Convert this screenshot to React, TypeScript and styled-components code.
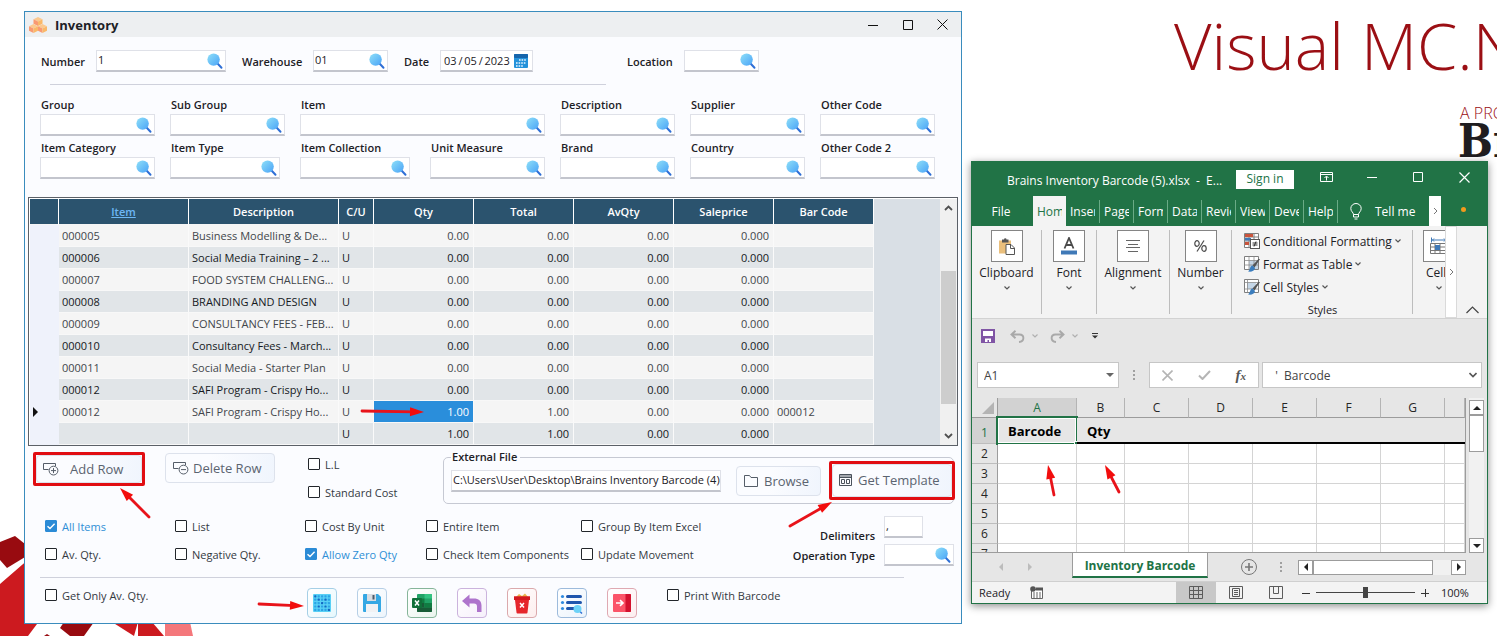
import React from "react";
import styled, { createGlobalStyle, css } from "styled-components";

const GlobalStyle = createGlobalStyle`
  *, *::before, *::after { box-sizing: border-box; }
  body { margin: 0; background: #ffffff; font-family: "Open Sans", "Segoe UI", sans-serif; font-size: 12px; color: #1d2126; }
  button, input { font: inherit; color: inherit; margin: 0; }
  button { padding: 0; border: 0; background: none; }
  svg { display: block; flex: none; }
`;

/* ---------- Desktop ---------- */

const Desktop = styled.div`
  position: relative;
  display: grid;
  grid-template-columns: minmax(0, 938fr) minmax(0, 517fr);
  gap: 9px;
  align-items: start;
  min-height: 100vh;
  padding: 11px 9px 8px 24px;
  overflow: hidden;
`;

const Wallpaper = styled.svg`
  position: absolute;
  left: 0;
  bottom: 0;
`;

const Brand = styled.div`
  position: absolute;
  top: 0;
  left: 1174px;
  white-space: nowrap;
  color: #9b0f14;
`;

const BrandTitle = styled.div`
  font-size: 65px;
  font-weight: 340;
  line-height: 90px;
`;

const BrandNote = styled.div`
  padding: 14px 0 0 286px;
  font-size: 16px;
  font-weight: 300;
  line-height: 18px;
`;

const BrandMaker = styled.div`
  padding-left: 284px;
  color: #1f1d20;
  font-family: "DejaVu Serif Condensed", "DejaVu Serif", serif;
  font-size: 46px;
  font-weight: 700;
  line-height: 38px;
`;

const ArrowSvg = styled.svg<{ $left?: number; $right?: number; $top: number }>`
  position: absolute;
  top: ${(p) => p.$top}px;
  ${(p) => (p.$right !== undefined ? `right: ${p.$right}px;` : `left: ${p.$left}px;`)}
  overflow: visible;
  pointer-events: none;
`;

type ArrowProps = { left?: number; right?: number; top: number; dx: number; dy: number };

/* Red pointer: runs from the tail over (dx, dy) to its tip. */
function Arrow({ left, right, top, dx, dy }: ArrowProps) {
  const w = Math.abs(dx);
  const h = Math.abs(dy);
  const x1 = dx < 0 ? w : 0;
  const y1 = dy < 0 ? h : 0;
  const len = Math.hypot(dx, dy);
  const angle = (Math.atan2(dy, dx) * 180) / Math.PI;
  return (
    <ArrowSvg $left={left} $right={right} $top={top} width={w || 1} height={h || 1} aria-hidden="true">
      <g transform={`translate(${x1} ${y1}) rotate(${angle})`} fill="#f20d0d">
        <path d={`M0 0H${len - 9}`} stroke="#e8131a" strokeWidth="2.8" strokeLinecap="round" />
        <path d={`M${len} 0L${len - 14} -4.5V4.5Z`} />
      </g>
    </ArrowSvg>
  );
}

/* ---------- Inventory window ---------- */

const InventoryWindow = styled.main`
  position: relative;
  background: #fbfcff;
  border: 1px solid #3a8cbd;
`;

const TitleBar = styled.header`
  display: flex;
  align-items: center;
  height: 25px;
  padding: 0 1px 0 4px;
  background: #edeff1;
`;

const WindowTitle = styled.h1`
  flex: 1;
  margin: 0 0 0 8px;
  font-size: 13px;
  font-weight: 700;
  line-height: 18px;
`;

const CaptionButton = styled.button`
  display: grid;
  place-items: center;
  width: 35px;
  height: 25px;
`;

const HeaderRow = styled.div`
  display: flex;
  padding: 13px 0 0 16px;
`;

const HeaderField = styled.div<{ $label: number; $before?: number }>`
  display: grid;
  grid-template-columns: ${(p) => p.$label}px auto;
  align-items: center;
  margin-left: ${(p) => p.$before || 0}px;
`;

const Label = styled.label`
  font-size: 11px;
  font-weight: 600;
  line-height: 17px;
  white-space: nowrap;
`;

const FieldBox = styled.div<{ $width?: number }>`
  display: flex;
  align-items: center;
  width: ${(p) => (p.$width ? `${p.$width}px` : "auto")};
  height: 22px;
  padding-right: 1px;
  background: #ffffff;
  border: 1px solid #dfe1e8;
  border-bottom: 2px solid #c3c5cd;
`;

const DateBox = styled(FieldBox)`
  padding-right: 4px;
`;

const TextInput = styled.input`
  flex: 1;
  min-width: 0;
  width: 100%;
  height: 18px;
  padding: 0 0 2px 1px;
  border: 0;
  background: transparent;
  outline: 0;
  font-size: 11px;
  line-height: 16px;
  text-overflow: clip;
`;

const DateInput = styled(TextInput)`
  padding: 0 0 0 3px;
`;

const HeaderRule = styled.hr`
  width: 556px;
  max-width: 90%;
  margin: 12px 0 0 25px;
  border: 0;
  border-top: 1px solid #cfd1dc;
`;

const Filters = styled.div`
  display: grid;
  grid-template-columns: repeat(7, minmax(0, 1fr));
  gap: 3px 15px;
  padding: 11px 26px 0 15px;
`;

const FilterField = styled.div<{ $span?: number; $short?: boolean }>`
  grid-column: span ${(p) => p.$span || 1};
  display: grid;
  row-gap: 1px;
  padding-right: ${(p) => (p.$short ? 5 : 0)}px;
`;

const FilterLabel = styled(Label)`
  padding-left: 1px;
`;

const GridFrame = styled.div`
  display: flex;
  margin: 18px 3px 0;
  padding: 1px 0 0 1px;
  border: 1px solid #5b6067;
  background: #ffffff;
`;

const DataTable = styled.table`
  flex: none;
  table-layout: fixed;
  width: 844px;
  border-collapse: separate;
  border-spacing: 0;
`;

const HeadCell = styled.th`
  height: 26px;
  padding: 0;
  background: #2b536e;
  border-right: 1px solid #ffffff;
  border-bottom: 1px solid #f5f5f5;
  color: #ffffff;
  font-size: 11px;
  font-weight: 600;
`;

const SortLink = styled.a`
  color: #6db7f5;
`;

const cell = css`
  height: 22px;
  padding: 0 4px 0 3px;
  border-right: 1px solid #fafafa;
  border-bottom: 1px solid #f8f8f8;
  line-height: 16px;
  font-size: 11px;
  font-weight: 400;
  white-space: nowrap;
  overflow: hidden;
`;

const MarkerCell = styled.th`
  ${cell}
  background: #eff2fb;
  border-color: #eff2fb;
`;

const BodyCell = styled.td<{ $alt: boolean; $number?: boolean; $selected?: boolean }>`
  ${cell}
  text-align: ${(p) => (p.$number ? "right" : "left")};
  background: ${(p) => (p.$selected ? "#2a8edb" : p.$alt ? "#e1e5e8" : "#f5f5f5")};
  color: ${(p) => (p.$selected ? "#ffffff" : p.$alt ? "#15191d" : "#42464b")};
`;

const GridFiller = styled.div`
  flex: 1;
  background: #d9dfe5;
`;

const GridScroll = styled.div`
  display: flex;
  flex-direction: column;
  width: 17px;
  padding: 0 1px;
  background: #f0f0f0;
`;

const ScrollEnd = styled.button`
  display: grid;
  place-items: center;
  height: 18px;
`;

const ScrollTrack = styled.div`
  flex: 1;
  display: grid;
  grid-template-rows: 54fr 132fr 23fr;
`;

const ScrollThumb = styled.div`
  grid-row: 2;
  background: #cdcdcd;
`;

const ActionRow = styled.div`
  display: flex;
  align-items: flex-start;
  padding: 3px 7px 0 8px;
`;

const Highlight = styled.div<{ $width: number; $height: number }>`
  flex: none;
  display: flex;
  width: ${(p) => p.$width}px;
  height: ${(p) => p.$height}px;
  border: 3px solid #e10d12;
  border-radius: 2px;
`;

const AddHighlight = styled(Highlight)`
  margin-top: 3px;
`;

const TemplateHighlight = styled(Highlight)`
  margin: -4px -2px -4px 8px;
`;

const PushButton = styled.button<{ $width?: number; $gap?: number }>`
  flex: ${(p) => (p.$width ? "none" : 1)};
  display: flex;
  align-items: center;
  gap: ${(p) => p.$gap || 5}px;
  width: ${(p) => (p.$width ? `${p.$width}px` : "auto")};
  height: 30px;
  padding-left: 7px;
  border: 1px solid #dde2ec;
  border-radius: 4px;
  background: linear-gradient(100deg, #fbfcff 40%, #f0f5fd);
  color: #5b6470;
  font-size: 13px;
  white-space: nowrap;
`;

const HighlightedButton = styled(PushButton)`
  height: 100%;
  padding: 0 0 1px 6px;
`;

const DeleteButton = styled(PushButton)`
  margin: 4px 0 0 20px;
`;

const OptionStack = styled.div`
  width: 135px;
  margin: 1px 0 0 33px;
`;

const CheckLabel = styled.label<{ $on?: boolean; $compact?: boolean }>`
  display: flex;
  align-items: center;
  gap: 5px;
  height: ${(p) => (p.$compact ? 14 : 28)}px;
  color: ${(p) => (p.$on ? "#2f8fd6" : "#34393f")};
  font-size: 11px;
  white-space: nowrap;
`;

const CheckInput = styled.input`
  appearance: none;
  flex: none;
  width: 12px;
  height: 12px;
  border: 1px solid #22262b;
  border-radius: 1px;
  background: #ffffff;
  &:checked {
    border-color: #2b8bd6;
    background: #2b8bd6;
  }
`;

const CheckSlot = styled.span`
  position: relative;
  display: grid;
`;

const CheckMark = styled.svg`
  position: absolute;
  inset: 0;
  pointer-events: none;
`;

const FileGroup = styled.fieldset`
  flex: 1;
  min-width: 0;
  margin: 0;
  padding: 0 0 7px 7px;
  border: 1px solid #c6c9d3;
  border-radius: 5px;
`;

const FileLegend = styled.legend`
  padding: 0 3px 0 1px;
  font-size: 11px;
  font-weight: 600;
  line-height: 16px;
`;

const FileRow = styled.div`
  display: flex;
  align-items: center;
`;

const FileBox = styled(FieldBox)`
  flex: 1;
  min-width: 0;
  padding-right: 0;
  margin-right: 15px;
`;

const OptionsRow = styled.div`
  display: flex;
  padding: 6px 7px 0 20px;
`;

const OptionGrid = styled.div`
  flex: 1;
  display: grid;
  grid-template-columns: 130px 130px 121px 155px 1fr;
  grid-auto-rows: 28px;
`;

const SideLabels = styled.div`
  display: grid;
  align-content: start;
  justify-items: end;
  row-gap: 3px;
  padding: 15px 9px 0 0;
`;

const SideFields = styled.div`
  display: grid;
  align-content: start;
  row-gap: 6px;
  padding-top: 4px;
`;

const FooterRule = styled.hr`
  margin: 9px 57px 0 15px;
  border: 0;
  border-top: 1px solid #cfd1dc;
`;

const Footer = styled.footer`
  display: flex;
  align-items: flex-start;
  padding: 10px 0 5px 20px;
`;

const FooterCheck = styled.div<{ $width?: number }>`
  width: ${(p) => (p.$width ? `${p.$width}px` : "auto")};
`;

const Tools = styled.div`
  display: flex;
  gap: 20px;
  margin-right: 30px;
`;

const ToolButton = styled.button<{ $line: string; $tint: string }>`
  display: grid;
  place-items: center;
  width: 30px;
  height: 30px;
  border: 1px solid ${(p) => p.$line};
  border-radius: 4px;
  background: linear-gradient(135deg, #ffffff, ${(p) => p.$tint});
`;

function SearchIcon() {
  return (
    <svg width="18" height="18" viewBox="0 0 18 18" aria-hidden="true">
      <defs>
        <linearGradient id="lens" x1="0" y1="0" x2="1" y2="1">
          <stop offset="0" stopColor="#8fe0f8" />
          <stop offset="1" stopColor="#4aa3f7" />
        </linearGradient>
      </defs>
      <path d="M11.5 11.5L15.5 15.8" stroke="#2f6fd6" strokeWidth="2" strokeLinecap="round" />
      <circle cx="7.6" cy="7.6" r="6.2" fill="url(#lens)" />
    </svg>
  );
}

function LookupField({ id, width, value }: { id: string; width?: number; value?: string }) {
  return (
    <FieldBox $width={width}>
      <TextInput id={id} defaultValue={value} />
      <SearchIcon />
    </FieldBox>
  );
}

function Check({ label, on, compact }: { label: string; on?: boolean; compact?: boolean }) {
  return (
    <CheckLabel $on={on} $compact={compact}>
      <CheckSlot>
        <CheckInput type="checkbox" defaultChecked={on} />
        {on && (
          <CheckMark width="12" height="12" viewBox="0 0 12 12">
            <path d="M2.5 6.2L5 8.6L9.6 3.8" fill="none" stroke="#fff" strokeWidth="1.4" />
          </CheckMark>
        )}
      </CheckSlot>
      {label}
    </CheckLabel>
  );
}

function CubesIcon() {
  const cube = (x: number, y: number) => (
    <g transform={`translate(${x} ${y})`}>
      <path d="M4.5 0L9 2.3L4.5 4.6L0 2.3Z" fill="#fcc98f" />
      <path d="M0 2.3L4.5 4.6V9L0 6.8Z" fill="#f99a72" />
      <path d="M9 2.3L4.5 4.6V9L9 6.8Z" fill="#fab868" />
    </g>
  );
  return (
    <svg width="18" height="18" viewBox="0 0 18 18" aria-hidden="true">
      {cube(4.5, 1)}
      {cube(0, 8)}
      {cube(9, 8)}
    </svg>
  );
}

function CalendarIcon() {
  return (
    <svg width="14" height="14" viewBox="0 0 14 14" aria-hidden="true">
      <rect width="14" height="14" rx="1" fill="#2492da" />
      <rect width="14" height="4" rx="1" fill="#1565ab" />
      <path d="M5 6h7M2 9h10M2 12h7" stroke="#e8f6ff" strokeWidth="1.6" strokeDasharray="1.6 1" />
    </svg>
  );
}

function RowIcon({ plus }: { plus?: boolean }) {
  return (
    <svg width="17" height="14" viewBox="0 0 17 14" fill="none" stroke="#555d68" aria-hidden="true">
      <path d="M5.500 7.500H.5V1.500H12.500V4" />
      <circle cx="10.500" cy="8.600" r="4.400" />
      <path d={plus ? "M8 8.600h5M10.500 6.100v5" : "M8 8.600h5"} />
    </svg>
  );
}

const columns = [
  { name: "Item", width: 130 },
  { name: "Description", width: 150 },
  { name: "C/U", width: 35 },
  { name: "Qty", width: 100 },
  { name: "Total", width: 100 },
  { name: "AvQty", width: 100 },
  { name: "Saleprice", width: 100 },
  { name: "Bar Code", width: 100 },
];

const rows = [
  ["000005", "Business Modelling & De...", "U", "0.00", "0.00", "0.00", "0.000", ""],
  ["000006", "Social Media Training – 2 ...", "U", "0.00", "0.00", "0.00", "0.000", ""],
  ["000007", "FOOD SYSTEM CHALLENG...", "U", "0.00", "0.00", "0.00", "0.000", ""],
  ["000008", "BRANDING AND DESIGN", "U", "0.00", "0.00", "0.00", "0.000", ""],
  ["000009", "CONSULTANCY FEES - FEB...", "U", "0.00", "0.00", "0.00", "0.000", ""],
  ["000010", "Consultancy Fees - March...", "U", "0.00", "0.00", "0.00", "0.000", ""],
  ["000011", "Social Media - Starter Plan", "U", "0.00", "0.00", "0.00", "0.000", ""],
  ["000012", "SAFI Program - Crispy Ho...", "U", "0.00", "0.00", "0.00", "0.000", ""],
  ["000012", "SAFI Program - Crispy Ho...", "U", "1.00", "1.00", "0.00", "0.000", "000012"],
  ["", "", "U", "1.00", "1.00", "0.00", "0.000", ""],
];

const CURRENT_ROW = 8;

const filters: { label: string; span?: number; short?: boolean }[] = [
  { label: "Group" },
  { label: "Sub Group" },
  { label: "Item", span: 2 },
  { label: "Description" },
  { label: "Supplier" },
  { label: "Other Code" },
  { label: "Item Category" },
  { label: "Item Type", short: true },
  { label: "Item Collection", short: true },
  { label: "Unit Measure" },
  { label: "Brand" },
  { label: "Country" },
  { label: "Other Code 2" },
];

const options = [
  "All Items", "List", "Cost By Unit", "Entire Item", "Group By Item Excel",
  "Av. Qty.", "Negative Qty.", "Allow Zero Qty", "Check Item Components", "Update Movement",
];

const checkedOptions = ["All Items", "Allow Zero Qty"];

function ItemGrid() {
  return (
    <GridFrame>
      <DataTable>
        <colgroup>
          <col width={29} />
          {columns.map((c) => (
            <col key={c.name} width={c.width} />
          ))}
        </colgroup>
        <thead>
          <tr>
            <HeadCell aria-label="Current row" />
            {columns.map((c, i) => (
              <HeadCell key={c.name} scope="col">
                {i === 0 ? <SortLink href="#item">{c.name}</SortLink> : c.name}
              </HeadCell>
            ))}
          </tr>
        </thead>
        <tbody>
          {rows.map((r, ri) => (
            <tr key={ri}>
              <MarkerCell>
                {ri === CURRENT_ROW && (
                  <svg width="5" height="10" viewBox="0 0 5 10">
                    <path d="M0 0L5 5L0 10Z" fill="#111" />
                  </svg>
                )}
              </MarkerCell>
              {r.map((v, ci) => (
                <BodyCell
                  key={ci}
                  $alt={ri % 2 === 1}
                  $number={ci > 2 && ci < 7}
                  $selected={ri === CURRENT_ROW && ci === 3}
                >
                  {v}
                </BodyCell>
              ))}
            </tr>
          ))}
        </tbody>
      </DataTable>
      <GridFiller />
      <GridScroll>
        <ScrollEnd aria-label="Scroll up">
          <svg width="9" height="6" viewBox="0 0 9 6">
            <path d="M1 5L4.5 1.5L8 5" fill="none" stroke="#505050" strokeWidth="1.8" />
          </svg>
        </ScrollEnd>
        <ScrollTrack>
          <ScrollThumb />
        </ScrollTrack>
        <ScrollEnd aria-label="Scroll down">
          <svg width="9" height="6" viewBox="0 0 9 6">
            <path d="M1 1L4.5 4.5L8 1" fill="none" stroke="#505050" strokeWidth="1.8" />
          </svg>
        </ScrollEnd>
      </GridScroll>
    </GridFrame>
  );
}

const dotGrid = [0, 1, 2, 3, 4];
const darkDots = ["0-0", "1-1", "2-2", "3-3", "4-4", "3-1", "1-3"];

function ToolBar() {
  return (
    <Tools>
      <ToolButton $line="#a5cfe6" $tint="#e6f8fd" aria-label="Grid">
        <svg width="18" height="18" viewBox="0 0 18 18">
          <rect width="18" height="18" rx="1" fill="#58d0f5" />
          {dotGrid.flatMap((x) =>
            dotGrid.map((y) => (
              <rect
                key={`${x}-${y}`}
                x={1.2 + x * 3.4}
                y={1.2 + y * 3.4}
                width="2.2"
                height="2.2"
                rx=".6"
                fill={darkDots.includes(`${x}-${y}`) ? "#1268c4" : "#2aa4e6"}
              />
            )),
          )}
        </svg>
      </ToolButton>
      <ToolButton $line="#b6cfe6" $tint="#edf5fc" aria-label="Save">
        <svg width="18" height="18" viewBox="0 0 18 18">
          <path d="M1 0H15L18 3V17a1 1 0 0 1-1 1H1a1 1 0 0 1-1-1V1a1 1 0 0 1 1-1Z" fill="#35a8e4" />
          <path d="M4 0h9v7H4z" fill="#d9dde2" />
          <path d="M9.500 1h2v4.500h-2z" fill="#4b5b6b" />
          <path d="M3 10h12v8H3z" fill="#f1f2f4" />
        </svg>
      </ToolButton>
      <ToolButton $line="#86b59a" $tint="#eaf5ee" aria-label="Export to Excel">
        <svg width="20" height="18" viewBox="0 0 20 18">
          <rect x="5" width="15" height="18" rx="1" fill="#21a366" />
          <path d="M12.500 0H19a1 1 0 0 1 1 1V4.500H12.500z" fill="#33c481" />
          <path d="M5 9h7.500v4.500H5z" fill="#185c37" />
          <path d="M5 4.500h7.500V9H5z" fill="#107c41" />
          <path d="M12.500 9H20v4.500h-7.500z" fill="#107c41" />
          <path d="M5 13.500H20V17a1 1 0 0 1-1 1H6a1 1 0 0 1-1-1z" fill="#185c37" />
          <rect y="4" width="10" height="10" rx="1" fill="#0f7038" />
          <path d="M3 6.500L7 11.500M7 6.500L3 11.500" stroke="#fff" strokeWidth="1.500" />
        </svg>
      </ToolButton>
      <ToolButton $line="#cbb3dd" $tint="#f6f0fb" aria-label="Undo">
        <svg width="20" height="18" viewBox="0 0 20 18">
          <path d="M7.500 0.500V4.500H12c4.500 0 7.500 2.500 7.500 7V18H15v-5.500c0-2-1-3-3-3H7.500V13.500L0 7Z" fill="#ae74cc" />
        </svg>
      </ToolButton>
      <ToolButton $line="#dba9ac" $tint="#fdeeee" aria-label="Delete">
        <svg width="18" height="21" viewBox="0 0 18 21">
          <path d="M3 4L6 1L9 3L12 0.500L15 4Z" fill="#e9b44a" />
          <path d="M1 3.500H17V7H16L14.500 19.500a1 1 0 0 1-1 1H4.500a1 1 0 0 1-1-1L2 7H1Z" fill="#e6262c" />
          <path d="M1 3.500H17V7H1Z" fill="#d3191f" />
          <path d="M7 10L11 14.500M11 10L7 14.500" stroke="#fff" strokeWidth="1.500" />
        </svg>
      </ToolButton>
      <ToolButton $line="#9dbbdc" $tint="#eaf3fc" aria-label="Search list">
        <svg width="24" height="22" viewBox="0 0 24 22">
          <g stroke="#1f56ad" strokeWidth="3" strokeLinecap="round">
            <path d="M7.500 4.500H20.500M7.500 10.500H20.500M7.500 16.500H14" />
          </g>
          <g fill="#2f8be0">
            <circle cx="2.500" cy="4.500" r="1.600" />
            <circle cx="2.500" cy="10.500" r="1.600" />
            <circle cx="2.500" cy="16.500" r="1.600" />
          </g>
          <path d="M19.500 19L22 21.500" stroke="#2f6fd6" strokeWidth="1.500" />
          <circle cx="17.500" cy="17" r="4" fill="#6cd2f7" />
        </svg>
      </ToolButton>
      <ToolButton $line="#dfa9b2" $tint="#fdeef0" aria-label="Exit">
        <svg width="18" height="18" viewBox="0 0 18 18">
          <rect width="18" height="18" rx="1" fill="#fb5468" />
          <path d="M12.500 0H17a1 1 0 0 1 1 1V17a1 1 0 0 1-1 1H12.500z" fill="#d3112e" />
          <path d="M3 9H9.500M7 6.200L10 9L7 11.800" fill="none" stroke="#fff" strokeWidth="1.600" />
        </svg>
      </ToolButton>
    </Tools>
  );
}

function Inventory() {
  return (
    <InventoryWindow>
      <TitleBar>
        <CubesIcon />
        <WindowTitle>Inventory</WindowTitle>
        <CaptionButton aria-label="Minimize">
          <svg width="10" height="10" viewBox="0 0 10 10"><path d="M0 5.500H10" stroke="#111" /></svg>
        </CaptionButton>
        <CaptionButton aria-label="Maximize">
          <svg width="10" height="10" viewBox="0 0 10 10"><path d="M.5 .5H9.500V9.500H.5Z" fill="none" stroke="#111" /></svg>
        </CaptionButton>
        <CaptionButton aria-label="Close">
          <svg width="11" height="11" viewBox="0 0 11 11"><path d="M.5 .5L10.500 10.500M10.500 .5L.5 10.500" stroke="#111" /></svg>
        </CaptionButton>
      </TitleBar>

      <HeaderRow>
        <HeaderField $label={55}>
          <Label htmlFor="number">Number</Label>
          <LookupField id="number" width={130} value="1" />
        </HeaderField>
        <HeaderField $label={71} $before={16}>
          <Label htmlFor="warehouse">Warehouse</Label>
          <LookupField id="warehouse" width={75} value="01" />
        </HeaderField>
        <HeaderField $label={36} $before={16}>
          <Label htmlFor="date">Date</Label>
          <DateBox $width={93}>
            <DateInput id="date" defaultValue={"03\u2009/\u200905\u2009/\u20092023"} />
            <CalendarIcon />
          </DateBox>
        </HeaderField>
        <HeaderField $label={57} $before={94}>
          <Label htmlFor="location">Location</Label>
          <LookupField id="location" width={75} />
        </HeaderField>
      </HeaderRow>
      <HeaderRule />

      <Filters>
        {filters.map((f) => {
          const id = `filter-${f.label.toLowerCase().replace(/ /g, "-")}`;
          return (
            <FilterField key={id} $span={f.span} $short={f.short}>
              <FilterLabel htmlFor={id}>{f.label}</FilterLabel>
              <LookupField id={id} />
            </FilterField>
          );
        })}
      </Filters>

      <ItemGrid />

      <ActionRow>
        <AddHighlight $width={112} $height={34}>
          <HighlightedButton $gap={10}>
            <RowIcon plus />
            Add Row
          </HighlightedButton>
        </AddHighlight>
        <DeleteButton $width={110} $gap={3}>
          <RowIcon />
          Delete Row
        </DeleteButton>
        <OptionStack>
          <Check label="L.L" />
          <Check label="Standard Cost" />
        </OptionStack>
        <FileGroup>
          <FileLegend>External File</FileLegend>
          <FileRow>
            <FileBox>
              <TextInput aria-label="External file path" defaultValue="C:\Users\User\Desktop\Brains Inventory Barcode (4)." />
            </FileBox>
            <PushButton $width={85} $gap={6}>
              <svg width="14" height="12" viewBox="0 0 14 12" fill="none" stroke="#555d68">
                <path d="M.5 11.500V.5H5.500L7 2.500H13.500V11.500Z" />
              </svg>
              Browse
            </PushButton>
            <TemplateHighlight $width={126} $height={39}>
              <HighlightedButton $gap={6}>
                <svg width="13" height="12" viewBox="0 0 13 12" fill="none" stroke="#4a525c">
                  <path d="M.5 .5H12.500V11.500H.5ZM.5 3.500H12.500M.5 2H12.500M2.500 5.500H5.500V9.500H2.500ZM7.500 5.500H10.500V9.500H7.500Z" />
                </svg>
                Get Template
              </HighlightedButton>
            </TemplateHighlight>
          </FileRow>
        </FileGroup>
      </ActionRow>

      <OptionsRow>
        <OptionGrid>
          {options.map((o) => (
            <Check key={o} label={o} on={checkedOptions.includes(o)} />
          ))}
        </OptionGrid>
        <SideLabels>
          <Label htmlFor="delimiters">Delimiters</Label>
          <Label htmlFor="operation">Operation Type</Label>
        </SideLabels>
        <SideFields>
          <FieldBox $width={39}>
            <TextInput id="delimiters" defaultValue="," />
          </FieldBox>
          <LookupField id="operation" width={70} />
        </SideFields>
      </OptionsRow>
      <FooterRule />

      <Footer>
        <FooterCheck $width={262}>
          <Check label="Get Only Av. Qty." compact />
        </FooterCheck>
        <ToolBar />
        <FooterCheck>
          <Check label="Print With Barcode" compact />
        </FooterCheck>
      </Footer>

      <Arrow left={337} top={399} dx={62} dy={1} />
      <Arrow left={95} top={476} dx={-29} dy={-29} />
      <Arrow right={129} top={490} dx={42} dy={-24} />
      <Arrow left={234} top={592} dx={45} dy={2} />
    </InventoryWindow>
  );
}

/* ---------- Excel window ---------- */

const ExcelWindow = styled.section`
  position: relative;
  margin-top: 150px;
  border: 1px solid #217346;
  background: #e6e6e6;
  box-shadow: 0 2px 8px rgba(0, 0, 0, 0.45);
`;

const ExcelTitle = styled.header`
  display: flex;
  align-items: center;
  height: 34px;
  padding-left: 35px;
  background: #217346;
  color: #ffffff;
`;

const ExcelName = styled.h2`
  flex: 1;
  min-width: 0;
  margin: 0;
  padding-top: 3px;
  font-size: 12px;
  font-weight: 400;
  line-height: 16px;
  white-space: pre;
`;

const SignIn = styled.button`
  width: 58px;
  height: 19px;
  margin-right: 9px;
  background: #ffffff;
  color: #217346;
  line-height: 18px;
`;

const ExcelCaption = styled.button<{ $last?: boolean }>`
  display: grid;
  place-items: center;
  width: 46px;
  height: 34px;
  padding-bottom: 4px;
`;

const Tabs = styled.nav`
  display: flex;
  align-items: center;
  height: 30px;
  background: #217346;
  color: #ffffff;
`;

const FileTab = styled.button`
  width: 61px;
  padding-right: 3px;
`;

const RibbonTab = styled.button<{ $active?: boolean }>`
  flex: none;
  width: ${(p) => (p.$active ? 33 : 34)}px;
  height: ${(p) => (p.$active ? 30 : 23)}px;
  padding: 0 4px;
  overflow: hidden;
  text-align: left;
  border-right: ${(p) => (p.$active ? "0" : "1px solid #6aab86")};
  background: ${(p) => (p.$active ? "#f3f3f3" : "transparent")};
  color: ${(p) => (p.$active ? "#217346" : "#ffffff")};
`;

const TabText = styled.span`
  display: block;
  overflow: hidden;
  white-space: nowrap;
`;

const TellMe = styled.button`
  flex: 1;
  display: flex;
  align-items: center;
  gap: 13px;
  padding-left: 12px;
  white-space: nowrap;
`;

const TabScroll = styled.button`
  display: grid;
  place-items: center;
  width: 12px;
  height: 30px;
  background: #ffffff;
`;

const Dot = styled.span`
  width: 5px;
  height: 5px;
  margin: 0 21px 3px 20px;
  border-radius: 50%;
  background: #f29a1c;
`;

const Ribbon = styled.div`
  display: flex;
  height: 93px;
  background: #f3f3f3;
  border-bottom: 1px solid #d2d2d2;
`;

const RibbonGroup = styled.div<{ $width: number }>`
  flex: none;
  display: flex;
  margin: 4px 0;
  width: ${(p) => p.$width}px;
  border-right: 1px solid #bdbdbd;
`;

const GroupButton = styled.button`
  flex: 1;
  display: flex;
  flex-direction: column;
  align-items: center;
  height: 70px;
`;

const GroupIcon = styled.span`
  display: grid;
  place-items: center;
  width: 32px;
  height: 32px;
  margin-bottom: 2px;
  border: 1px solid #858585;
  background: #ffffff;
`;

const GroupName = styled.span`
  height: 22px;
  line-height: 18px;
`;

const StylesGroup = styled(RibbonGroup)`
  flex-direction: column;
  padding: 0 0 0 12px;
`;

const StyleItem = styled.button`
  flex: none;
  display: flex;
  align-items: center;
  gap: 3px;
  height: 23px;
  padding-bottom: 1px;
  white-space: nowrap;
`;

const StyleCaption = styled.span`
  flex: none;
  padding: 3px 11px 0 0;
  text-align: center;
  font-size: 11px;
  line-height: 16px;
`;

const CellsGroup = styled.div`
  flex: 1;
  min-width: 0;
  display: flex;
  justify-content: flex-start;
  margin-top: 4px;
  padding-left: 10px;
  overflow: hidden;
`;

const CellsButton = styled(GroupButton)`
  flex: none;
  width: 32px;
`;

const RibbonScroll = styled.button`
  width: 12px;
  background: #ffffff;
  border: 1px solid #dadada;
  display: grid;
  place-items: center;
`;

const RibbonCollapse = styled.button`
  display: flex;
  align-items: flex-end;
  justify-content: center;
  width: 30px;
  padding-bottom: 4px;
`;

const QuickBar = styled.div`
  display: flex;
  align-items: center;
  height: 34px;
  padding: 0 9px;
`;

const QuickButton = styled.button<{ $after: number }>`
  margin-right: ${(p) => p.$after}px;
`;

const FormulaBar = styled.div`
  display: flex;
  align-items: center;
  padding: 9px 5px 10px;
`;

const FormulaBox = styled.div<{ $width?: number }>`
  flex: ${(p) => (p.$width ? "none" : 1)};
  display: flex;
  align-items: center;
  width: ${(p) => (p.$width ? `${p.$width}px` : "auto")};
  min-width: 0;
  height: 26px;
  padding: 0 4px 0 6px;
  border: 1px solid #c6c6c6;
  background: #ffffff;
`;

const FormulaInput = styled.input`
  flex: 1;
  min-width: 0;
  width: 100%;
  padding: 0;
  border: 0;
  outline: 0;
  background: transparent;
  color: #444444;
`;

const FormulaGap = styled.span`
  display: grid;
  place-items: center;
  width: 30px;
`;

const FormulaActions = styled(FormulaBox)`
  justify-content: space-between;
  padding: 0 12px;
  margin-right: 3px;
`;

const FunctionMark = styled.span`
  color: #555555;
  font-family: "Liberation Serif", serif;
  font-size: 15px;
  font-style: italic;
  font-weight: 700;
  line-height: 18px;
`;

const FunctionSub = styled.span`
  font-size: 11px;
`;

const SheetArea = styled.div`
  display: flex;
  gap: 3px;
  height: 155px;
  padding-right: 3px;
`;

const SheetClip = styled.div`
  flex: 1;
  min-width: 0;
  overflow: hidden;
  border-right: 1px solid #9c9c9c;
  border-bottom: 1px solid #9c9c9c;
`;

const Sheet = styled.table`
  table-layout: fixed;
  width: 100%;
  border-collapse: separate;
  border-spacing: 0;
`;

const ColumnHead = styled.th<{ $active?: boolean }>`
  height: 20px;
  padding: 0;
  border-right: 1px solid #b4b4b4;
  border-bottom: 1px solid ${(p) => (p.$active ? "#217346" : "#9c9c9c")};
  background: ${(p) => (p.$active ? "#d2d2d2" : "#e6e6e6")};
  color: ${(p) => (p.$active ? "#217346" : "#262626")};
  font-weight: 400;
  line-height: 16px;
`;

const CornerHead = styled(ColumnHead)`
  vertical-align: bottom;
  border-color: #9c9c9c;
`;

const CornerMark = styled.svg`
  margin: 0 3px 3px auto;
`;

const RowHead = styled.th<{ $active?: boolean }>`
  height: ${(p) => (p.$active ? 26 : 20)}px;
  padding: ${(p) => (p.$active ? "5px 0 0" : "1px 0 0")};
  border-right: 1px solid #9c9c9c;
  border-bottom: 1px solid #bdbdbd;
  background: ${(p) => (p.$active ? "#d2d2d2" : "#e6e6e6")};
  color: ${(p) => (p.$active ? "#217346" : "#262626")};
  font-weight: 400;
  line-height: 16px;
`;

const SheetCell = styled.td<{ $title?: boolean }>`
  position: relative;
  padding: ${(p) => (p.$title ? "2px 10px 0" : "0 10px")};
  border-right: ${(p) => (p.$title ? "0" : "1px solid #d4d4d4")};
  border-bottom: ${(p) => (p.$title ? "2px solid #000000" : "1px solid #d4d4d4")};
  background: ${(p) => (p.$title ? "#e6e6e6" : "#ffffff")};
  color: #000000;
  font-size: 13px;
  font-weight: 700;
  line-height: 18px;
  white-space: nowrap;
`;

const Selection = styled.span`
  position: absolute;
  inset: -2px -1px -3px -2px;
  border: 2px solid #217346;
  box-shadow: inset 0 0 0 1px #ffffff;
  &::after {
    content: "";
    position: absolute;
    right: -4px;
    bottom: -3px;
    width: 6px;
    height: 5px;
    background: #217346;
    border-left: 1px solid #ffffff;
    border-top: 1px solid #ffffff;
  }
`;

const VerticalBar = styled.div`
  display: flex;
  flex-direction: column;
  width: 15px;
  padding-top: 2px;
  background: #f1f1f1;
`;

const BarButton = styled.button`
  display: grid;
  place-items: center;
  width: 15px;
  height: 15px;
  border: 1px solid #9c9c9c;
  background: #ffffff;
`;

const VerticalThumb = styled.div`
  height: 37px;
  margin-bottom: auto;
  border: 1px solid #9c9c9c;
  background: #ffffff;
`;

const SheetTabs = styled.div`
  display: flex;
  align-items: center;
  height: 28px;
  padding-right: 21px;
`;

const SheetNav = styled.div`
  display: flex;
  justify-content: space-between;
  width: 100px;
  padding: 0 38px 0 25px;
`;

const SheetTab = styled.button`
  align-self: flex-start;
  width: 136px;
  height: 25px;
  padding-top: 2px;
  border: 1px solid #9c9c9c;
  border-top: 0;
  border-bottom: 2px solid #217346;
  background: #ffffff;
  color: #217346;
  font-weight: 700;
`;

const SheetTools = styled.div`
  flex: 1;
  display: flex;
  align-items: center;
  justify-content: space-between;
  padding: 0 15px 0 33px;
`;

const HorizontalBar = styled.div`
  display: flex;
  flex: none;
  width: 168px;
  background: #f1f1f1;
`;

const HorizontalThumb = styled.div`
  width: 120px;
  margin-right: auto;
  border: 1px solid #9c9c9c;
  background: #ffffff;
`;

const StatusBar = styled.footer`
  display: flex;
  align-items: center;
  height: 22px;
  padding-left: 7px;
  border-top: 1px solid #cfcfcf;
  background: #f3f3f3;
  font-size: 11px;
`;

const StatusText = styled.span`
  width: 51px;
`;

const ViewButton = styled.button<{ $active?: boolean }>`
  display: grid;
  place-items: center;
  width: 40px;
  height: 21px;
  background: ${(p) => (p.$active ? "#c8c8c8" : "transparent")};
`;

const StatusSpacer = styled.span`
  flex: 1;
`;

const ZoomButton = styled.button`
  display: grid;
  place-items: center;
  width: 20px;
  height: 20px;
`;

const ZoomSlider = styled.input`
  appearance: none;
  width: 99px;
  height: 12px;
  background: linear-gradient(#444, #444) center / 100% 1px no-repeat;
  &::-webkit-slider-thumb {
    appearance: none;
    width: 5px;
    height: 11px;
    background: #444444;
  }
`;

const ZoomValue = styled.span`
  width: 52px;
  padding-left: 6px;
`;

function Chevron({ color = "#555" }: { color?: string }) {
  return (
    <svg width="6" height="4" viewBox="0 0 6 4" aria-hidden="true">
      <path d="M.5 .5L3 3L5.500 .5" fill="none" stroke={color} strokeWidth="1.200" />
    </svg>
  );
}

function RightChevron() {
  return (
    <svg width="5" height="8" viewBox="0 0 5 8" aria-hidden="true">
      <path d="M1 1L4 4L1 7" fill="none" stroke="#777" />
    </svg>
  );
}

function Triangle({ turn, color = "#222" }: { turn: number; color?: string }) {
  return (
    <svg width="8" height="8" viewBox="0 0 8 8" aria-hidden="true">
      <path d="M0 6L4 2L8 6Z" fill={color} transform={`rotate(${turn} 4 4)`} />
    </svg>
  );
}

function Dots() {
  return (
    <svg width="3" height="11" viewBox="0 0 3 11" fill="#a0a0a0" aria-hidden="true">
      <path d="M0 0h2v2H0zM0 4h2v2H0zM0 8h2v2H0z" />
    </svg>
  );
}

function StyleIcon({ kind }: { kind: "rules" | "table" | "cells" }) {
  if (kind === "rules") {
    return (
      <svg width="16" height="16" viewBox="0 0 16 16">
        <path d="M.5 .5H14.500V14.500H.5ZM.5 4H14.500M.5 8H14.500M5 .5V14.500M10 .5V8" fill="#fff" stroke="#7f7f7f" />
        <path d="M1 1h8v3H1zM1 9h4v3H1z" fill="#c9543c" />
        <path d="M1 5h6v2.500H1z" fill="#3f79b7" />
        <rect x="6.500" y="6.500" width="9" height="9" fill="#fff" stroke="#555" />
        <path d="M8.500 10H13.500M8.500 12H13.500M12 8.500L10 13.500" stroke="#333" />
      </svg>
    );
  }
  return (
    <svg width="16" height="16" viewBox="0 0 16 16">
      <path d="M.5 .5H14.500V13.500H.5Z" fill="#fff" stroke="#7f7f7f" />
      <path d={kind === "table" ? "M5 4.500H14V13H5z" : "M3 3.500H12V10H3z"} fill="#c5d6e6" />
      <path d={kind === "table" ? "M.5 4.500H14.500M.5 9H14.500M5 .5V13.500M10 .5V13.500" : "M.5 3.500H14.500M.5 10H14.500M3.500 .5V13.500"} stroke="#8c8c8c" strokeWidth=".8" fill="none" />
      <path d="M16 3L10.500 11.500L8.500 9.500L14.500 3Z" fill="#555" />
      <path d="M8.500 9.500L11 12C10.500 15.500 7 16 4 15.500C6.500 14 5.500 10 8.500 9.500Z" fill="#3b7dbd" />
    </svg>
  );
}

function ViewIcon({ path }: { path: string }) {
  return (
    <svg width="14" height="13" viewBox="0 0 14 13" fill="none" stroke="#5c5c5c" aria-hidden="true">
      <path d={path} />
    </svg>
  );
}

const ribbonGroups = [
  {
    name: "Clipboard",
    width: 70,
    icon: (
      <svg width="16" height="17" viewBox="0 0 16 17">
        <path d="M0 2.500H12V15.500H0Z" fill="#eabf7c" />
        <path d="M3 1.500H5A1.200 1.200 0 0 1 7.500 1.500H9.500V4.500H3Z" fill="#555" />
        <path d="M7 6.500H12L15.500 10V16.500H7Z" fill="#fff" stroke="#555" />
        <path d="M11.500 6.500V10.500H15.500" fill="none" stroke="#555" />
      </svg>
    ),
  },
  {
    name: "Font",
    width: 55,
    icon: (
      <svg width="16" height="18" viewBox="0 0 16 18">
        <path d="M3.500 11.500L8 1L12.500 11.500M5 8H11" fill="none" stroke="#4a4a4a" strokeWidth="1.800" />
        <path d="M0 13.500h16v4H0z" fill="#3f79b7" />
      </svg>
    ),
  },
  {
    name: "Alignment",
    width: 73,
    icon: (
      <svg width="14" height="12" viewBox="0 0 14 12">
        <path d="M0 .5H14M2 4.500H12M0 7.500H14M2 11.500H12" stroke="#666" />
      </svg>
    ),
  },
  {
    name: "Number",
    width: 62,
    icon: (
      <svg width="13" height="12" viewBox="0 0 13 12" fill="none" stroke="#4a4a4a" strokeWidth="1.200">
        <ellipse cx="3" cy="3.500" rx="2.200" ry="2.800" />
        <ellipse cx="10" cy="8.500" rx="2.200" ry="2.800" />
        <path d="M10 .5L3 11.500" />
      </svg>
    ),
  },
];

/* Narrow tabs show only the start of their name. */
const ribbonTabs = [
  { name: "Insert", short: "Inser" },
  { name: "Page Layout", short: "Page" },
  { name: "Formulas", short: "Form" },
  { name: "Data", short: "Data" },
  { name: "Review", short: "Revie" },
  { name: "View", short: "View" },
  { name: "Developer", short: "Deve" },
  { name: "Help", short: "Help" },
];
const sheetColumns = ["A", "B", "C", "D", "E", "F", "G"];
const sheetWidths = [79, 48, 64, 64, 64, 64, 64];
const sheetRows = [1, 2, 3, 4, 5, 6, 7];
const sheetTitles: Record<string, string> = { A: "Barcode", B: "Qty" };

function Spreadsheet() {
  return (
    <SheetArea>
      <SheetClip>
        <Sheet>
          <colgroup>
            <col width={26} />
            {sheetWidths.map((w, i) => (
              <col key={i} width={w} />
            ))}
            <col />
          </colgroup>
          <thead>
            <tr>
              <CornerHead aria-label="Select all">
                <CornerMark width="12" height="12" viewBox="0 0 12 12">
                  <path d="M12 0V12H0Z" fill="#b4b4b4" />
                </CornerMark>
              </CornerHead>
              {sheetColumns.map((c) => (
                <ColumnHead key={c} scope="col" $active={c === "A"}>
                  {c}
                </ColumnHead>
              ))}
              <ColumnHead aria-label="H" />
            </tr>
          </thead>
          <tbody>
            {sheetRows.map((n) => (
              <tr key={n}>
                <RowHead scope="row" $active={n === 1}>
                  {n}
                </RowHead>
                {[...sheetColumns, "H"].map((c) => (
                  <SheetCell key={c} $title={n === 1}>
                    {n === 1 && sheetTitles[c]}
                    {n === 1 && c === "A" && <Selection />}
                  </SheetCell>
                ))}
              </tr>
            ))}
          </tbody>
        </Sheet>
      </SheetClip>
      <VerticalBar>
        <BarButton aria-label="Scroll up"><Triangle turn={0} /></BarButton>
        <VerticalThumb />
        <BarButton aria-label="Scroll down"><Triangle turn={180} /></BarButton>
      </VerticalBar>
    </SheetArea>
  );
}

function Excel() {
  return (
    <ExcelWindow>
      <ExcelTitle>
        <ExcelName>{"Brains Inventory Barcode (5).xlsx  -  E..."}</ExcelName>
        <SignIn>Sign in</SignIn>
        <ExcelCaption aria-label="Ribbon display">
          <svg width="13" height="10" viewBox="0 0 13 10" fill="none" stroke="#fff">
            <path d="M.5 .5H12.500V9.500H.5ZM.5 2.500H12.500M6.500 8.500V4.500M4.500 6L6.500 4L8.500 6" />
          </svg>
        </ExcelCaption>
        <ExcelCaption aria-label="Minimize">
          <svg width="10" height="10" viewBox="0 0 10 10"><path d="M0 5.500H10" stroke="#fff" /></svg>
        </ExcelCaption>
        <ExcelCaption aria-label="Maximize">
          <svg width="10" height="10" viewBox="0 0 10 10"><path d="M.5 .5H9.500V9.500H.5Z" fill="none" stroke="#fff" /></svg>
        </ExcelCaption>
        <ExcelCaption aria-label="Close">
          <svg width="11" height="11" viewBox="0 0 11 11"><path d="M.5 .5L10.500 10.500M10.500 .5L.5 10.500" stroke="#fff" strokeWidth="1.200" /></svg>
        </ExcelCaption>
      </ExcelTitle>

      <Tabs>
        <FileTab>File</FileTab>
        <RibbonTab $active aria-label="Home">
          <TabText>Hom</TabText>
        </RibbonTab>
        {ribbonTabs.map((t) => (
          <RibbonTab key={t.name} aria-label={t.name}>
            <TabText>{t.short}</TabText>
          </RibbonTab>
        ))}
        <TellMe>
          <svg width="12" height="17" viewBox="0 0 12 17" fill="none" stroke="#fff">
            <path d="M3.500 11.500C3.500 9.500 .8 8.500 .8 5.500A5.200 5 0 0 1 11.200 5.500C11.200 8.500 8.500 9.500 8.500 11.500ZM3.500 11.500V14H8.500V11.500M4.500 16H7.500" />
          </svg>
          Tell me
        </TellMe>
        <TabScroll aria-label="More tabs"><RightChevron /></TabScroll>
        <Dot />
      </Tabs>

      <Ribbon>
        {ribbonGroups.map((g) => (
          <RibbonGroup key={g.name} $width={g.width}>
            <GroupButton>
              <GroupIcon>{g.icon}</GroupIcon>
              <GroupName>{g.name}</GroupName>
              <Chevron />
            </GroupButton>
          </RibbonGroup>
        ))}
        <StylesGroup $width={181}>
          <StyleItem><StyleIcon kind="rules" />Conditional Formatting <Chevron /></StyleItem>
          <StyleItem><StyleIcon kind="table" />Format as Table <Chevron /></StyleItem>
          <StyleItem><StyleIcon kind="cells" />Cell Styles <Chevron /></StyleItem>
          <StyleCaption>Styles</StyleCaption>
        </StylesGroup>
        <CellsGroup>
          <CellsButton>
            <GroupIcon>
              <svg width="18" height="18" viewBox="0 0 18 18" fill="none">
                <path d="M1.500 .5V5.500M16.500 .5V5.500M2 3H16M4 1.500L2.500 3L4 4.500M14 1.500L15.500 3L14 4.500" stroke="#3f79b7" />
                <path d="M.5 6.500H17.500V16.500H.5ZM.5 10H17.500M.5 13.500H17.500M5 6.500V16.500M10 6.500V16.500" stroke="#777" />
                <path d="M5 8h5v5H5z" fill="#3f79b7" />
              </svg>
            </GroupIcon>
            <GroupName>Cells</GroupName>
            <Chevron />
          </CellsButton>
        </CellsGroup>
        <RibbonScroll aria-label="Scroll ribbon"><RightChevron /></RibbonScroll>
        <RibbonCollapse aria-label="Collapse ribbon">
          <svg width="13" height="8" viewBox="0 0 13 8"><path d="M.5 7L6.500 1L12.500 7" fill="none" stroke="#444" strokeWidth="1.200" /></svg>
        </RibbonCollapse>
      </Ribbon>

      <QuickBar>
        <QuickButton $after={15} aria-label="Save">
          <svg width="14" height="14" viewBox="0 0 14 14">
            <path d="M1 1H13V13H1Z" fill="#fff" stroke="#8055a5" strokeWidth="2" />
            <path d="M1 7H13V14H1Z" fill="#8055a5" />
            <path d="M4 9.500H10V13H8V11H6.500V13H4Z" fill="#fff" />
          </svg>
        </QuickButton>
        <QuickButton $after={7} aria-label="Undo">
          <svg width="15" height="13" viewBox="0 0 15 13" fill="none" stroke="#a9a9a9" strokeWidth="1.900">
            <path d="M5.500 .8L1.500 4.500L5.500 8.200M1.500 4.500H9.500C14.500 4.500 15 11.500 9 12" />
          </svg>
        </QuickButton>
        <QuickButton $after={12} aria-label="Undo history"><Chevron color="#b0b0b0" /></QuickButton>
        <QuickButton $after={7} aria-label="Redo">
          <svg width="15" height="13" viewBox="0 0 15 13" fill="none" stroke="#a9a9a9" strokeWidth="1.900">
            <path d="M9.500 .8L13.500 4.500L9.500 8.200M13.500 4.500H5.500C.5 4.500 0 11.500 6 12" />
          </svg>
        </QuickButton>
        <QuickButton $after={14} aria-label="Redo history"><Chevron color="#b0b0b0" /></QuickButton>
        <QuickButton $after={0} aria-label="Customize toolbar">
          <svg width="6" height="6" viewBox="0 0 6 6"><path d="M0 .5H6" stroke="#333" /><path d="M0 2.500H6L3 5.500Z" fill="#333" /></svg>
        </QuickButton>
      </QuickBar>

      <FormulaBar>
        <FormulaBox $width={142}>
          <FormulaInput aria-label="Name box" defaultValue="A1" />
          <Triangle turn={180} color="#666" />
        </FormulaBox>
        <FormulaGap>
          <Dots />
        </FormulaGap>
        <FormulaActions $width={110}>
          <svg width="11" height="11" viewBox="0 0 11 11"><path d="M.5 .5L10.500 10.500M10.500 .5L.5 10.500" stroke="#b5b5b5" strokeWidth="1.600" /></svg>
          <svg width="13" height="10" viewBox="0 0 13 10"><path d="M1 5.500L4.500 9L12 1" fill="none" stroke="#b5b5b5" strokeWidth="2" /></svg>
          <FunctionMark>f<FunctionSub>x</FunctionSub></FunctionMark>
        </FormulaActions>
        <FormulaBox>
          <FormulaInput aria-label="Formula" defaultValue="  '  Barcode" />
          <svg width="8" height="6" viewBox="0 0 8 6"><path d="M.5 1L4 4.500L7.500 1" fill="none" stroke="#555" strokeWidth="1.600" /></svg>
        </FormulaBox>
      </FormulaBar>

      <Spreadsheet />

      <SheetTabs>
        <SheetNav>
          <Triangle turn={270} color="#bcbcbc" />
          <Triangle turn={90} color="#bcbcbc" />
        </SheetNav>
        <SheetTab>Inventory Barcode</SheetTab>
        <SheetTools>
          <button aria-label="New sheet">
            <svg width="16" height="16" viewBox="0 0 16 16" fill="none" stroke="#777">
              <circle cx="8" cy="8" r="7.500" />
              <path d="M4 8H12M8 4V12" strokeWidth="1.600" />
            </svg>
          </button>
          <Dots />
        </SheetTools>
        <HorizontalBar>
          <BarButton aria-label="Scroll left"><Triangle turn={270} /></BarButton>
          <HorizontalThumb />
          <BarButton aria-label="Scroll right"><Triangle turn={90} /></BarButton>
        </HorizontalBar>
      </SheetTabs>

      <StatusBar>
        <StatusText>Ready</StatusText>
        <svg width="13" height="13" viewBox="0 0 13 13">
          <path d="M1.500 3.500H12.500V12.500H1.500Z" fill="#fff" stroke="#666" />
          <path d="M6 1.500h7v3H6z" fill="#555" />
          <path d="M3 7H11M3 9H11M3 11H11" stroke="#666" strokeDasharray="2 1" />
          <circle cx="3" cy="3" r="2.800" fill="#555" />
        </svg>
        <StatusSpacer />
        <ViewButton $active aria-label="Normal view">
          <ViewIcon path="M.5 .5H13.500V12.500H.5ZM.5 4.500H13.500M.5 8.500H13.500M4.500 .5V12.500M9.500 .5V12.500" />
        </ViewButton>
        <ViewButton aria-label="Page layout view">
          <ViewIcon path="M.5 .5H13.500V12.500H.5ZM3.500 2.500H10.500V10.500H3.500ZM5 4.500H9M5 6.500H9M5 8.500H9" />
        </ViewButton>
        <ViewButton aria-label="Page break view">
          <ViewIcon path="M.5 .5H13.500V12.500H.5ZM4.500 .5V7.500M9.500 .5V7.500M4.500 7.500H9.500" />
        </ViewButton>
        <ZoomButton aria-label="Zoom out">
          <svg width="8" height="8" viewBox="0 0 8 8"><path d="M0 4.500H8" stroke="#333" /></svg>
        </ZoomButton>
        <ZoomSlider type="range" aria-label="Zoom" min={0} max={100} defaultValue={50} />
        <ZoomButton aria-label="Zoom in">
          <svg width="8" height="8" viewBox="0 0 8 8"><path d="M0 4.500H8M4.500 0V8" stroke="#333" /></svg>
        </ZoomButton>
        <ZoomValue>100%</ZoomValue>
      </StatusBar>

      <Arrow left={76} top={303} dx={-6} dy={-30} />
      <Arrow left={133} top={303} dx={-14} dy={-27} />
    </ExcelWindow>
  );
}

export default function App() {
  return (
    <Desktop>
      <GlobalStyle />
      <Wallpaper width="200" height="106" viewBox="0 0 200 106" aria-hidden="true">
        <path d="M0 12L15 6L30 18V24L7 38L0 30Z" fill="#980b10" />
        <path d="M0 54L30 28V90H40L28 106H0Z" fill="#cc1a1f" />
        <path d="M64 92H94L84 106H70L60 98Z" fill="#980b10" />
        <path d="M44 106L47 104L50 106Z" fill="#980b10" />
        <path d="M112 92H138L134 106Z" fill="#cc1a1f" />
        <path d="M138 92H152L164 106H138Z" fill="#cc1a1f" />
        <path d="M165 92H190L193 106H165Z" fill="#f4777b" />
      </Wallpaper>
      <Brand>
        <BrandTitle>Visual MC.N</BrandTitle>
        <BrandNote>A PRO</BrandNote>
        <BrandMaker>Br</BrandMaker>
      </Brand>
      <Inventory />
      <Excel />
    </Desktop>
  );
}
